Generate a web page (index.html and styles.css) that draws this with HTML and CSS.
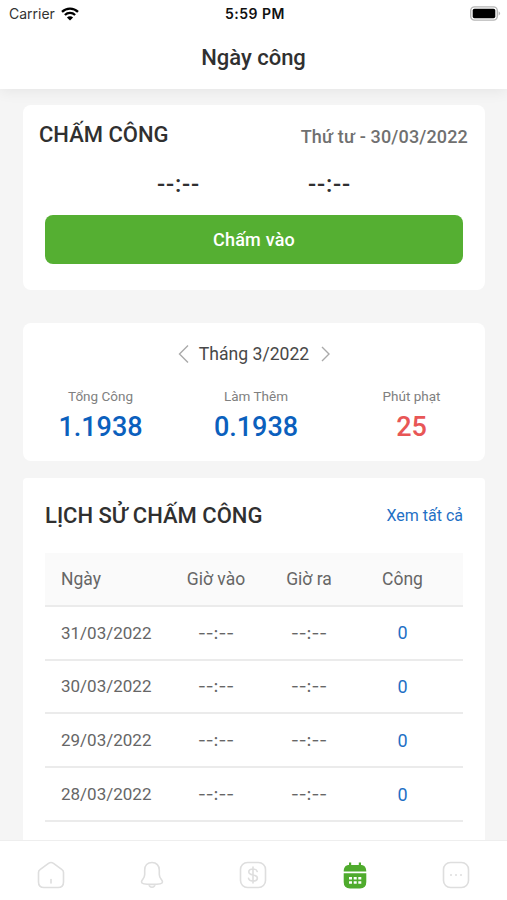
FILE: index.html
```html
<!DOCTYPE html>
<html lang="vi">
<head>
    <meta charset="UTF-8">
    <meta name="viewport" content="width=device-width, initial-scale=1.0">
    <title>Ngày công</title>
    <link rel="stylesheet" href="styles.css">
</head>
<body>
    <header class="header">
        <div class="status-bar">
            <div class="carrier">
                <span>Carrier</span>
                <svg width="18" height="14" viewBox="0 0 18 14">
                    <path d="M1 4.9a11.4 11.4 0 0 1 16 0M3.9 8a7.3 7.3 0 0 1 10.2 0" fill="none" stroke="#000" stroke-width="2.3"/>
                    <path d="M9 13.6L5.9 10.5a4.4 4.4 0 0 1 6.2 0z" fill="#000"/>
                </svg>
            </div>
            <span class="clock">5:59 PM</span>
            <div class="battery-wrap">
                <svg width="31" height="15" viewBox="0 0 31 15">
                    <rect x="0.7" y="0.9" width="26.6" height="13.2" rx="3.8" fill="#fff" stroke="#b5b5b5" stroke-width="1.4"/>
                    <rect x="2.7" y="2.8" width="22.6" height="9.4" rx="1.8" fill="#000"/>
                    <path d="M28.6 5.3q3 2.200 0 4.400z" fill="#b5b5b5"/>
                </svg>
            </div>
        </div>
        <h1>Ngày công</h1>
    </header>

    <main class="content">
        <section class="card checkin">
            <div class="checkin-top">
                <h2>CHẤM CÔNG</h2>
                <span class="today">Thứ tư - 30/03/2022</span>
            </div>
            <div class="times">
                <span>--:--</span>
                <span>--:--</span>
            </div>
            <button type="button">Chấm vào</button>
        </section>

        <section class="card summary">
            <div class="month">
                <svg width="11" height="20" viewBox="0 0 11 20"><path d="M10 1.5L1.5 10L10 18.5"/></svg>
                <span>Tháng 3/2022</span>
                <svg class="next" width="9" height="16" viewBox="0 0 9 16"><path d="M1 1L8 8L1 15"/></svg>
            </div>
            <div class="stats">
                <div class="stat">
                    <p>Tổng Công</p>
                    <strong>1.1938</strong>
                </div>
                <div class="stat">
                    <p>Làm Thêm</p>
                    <strong>0.1938</strong>
                </div>
                <div class="stat penalty">
                    <p>Phút phạt</p>
                    <strong>25</strong>
                </div>
            </div>
        </section>

        <section class="card history">
            <div class="history-top">
                <h2>LỊCH SỬ CHẤM CÔNG</h2>
                <a>Xem tất cả</a>
            </div>
            <table>
                <thead>
                    <tr><th class="date">Ngày</th><th class="in">Giờ vào</th><th class="out">Giờ ra</th><th class="work">Công</th></tr>
                </thead>
                <tbody>
                    <tr><td class="date">31/03/2022</td><td class="hour">--:--</td><td class="hour">--:--</td><td class="work">0</td></tr>
                    <tr><td class="date">30/03/2022</td><td class="hour">--:--</td><td class="hour">--:--</td><td class="work">0</td></tr>
                    <tr><td class="date">29/03/2022</td><td class="hour">--:--</td><td class="hour">--:--</td><td class="work">0</td></tr>
                    <tr><td class="date">28/03/2022</td><td class="hour">--:--</td><td class="hour">--:--</td><td class="work">0</td></tr>
                </tbody>
            </table>
        </section>
    </main>

    <nav class="tabs">
        <!-- Trang chủ -->
        <svg viewBox="0 0 28 28">
            <path d="M1.5 11.5Q1.5 9.600 3 8.600L11.500 2.400Q14 .7 16.500 2.400L25 8.600Q26.500 9.600 26.500 11.500V21Q26.500 26.500 21 26.500H7Q1.500 26.500 1.500 21z"/>
            <path class="door" d="M14 18.500v3.500"/>
        </svg>
        <!-- Thông báo -->
        <svg viewBox="0 0 28 28">
            <path d="M14 1.500c-4.500 0-7.300 3.200-7.300 7.500v4.500c0 4-3.200 5-3.200 7.500 0 1.300 3 2.400 10.500 2.400s10.500-1.100 10.500-2.400c0-2.500-3.200-3.500-3.200-7.500V9c0-4.300-2.800-7.500-7.300-7.500zM11 23.500c.4 3.600 5.600 3.600 6 0"/>
        </svg>
        <!-- Lương -->
        <svg viewBox="0 0 28 28">
            <rect x="1.5" y="1.5" width="25" height="25" rx="7"/>
            <path d="M14 6v16M18.200 10.500c-.5-1.800-2-2.500-4.200-2.500-2.400 0-4.200 1-4.200 2.900 0 4.200 8.600 1.900 8.600 6.200 0 2-1.900 3-4.400 3-2.400 0-4.100-.9-4.500-2.900"/>
        </svg>
        <!-- Ngày công -->
        <svg class="active" viewBox="0 0 28 28">
            <path d="M2.700 10.500C2.700 6 5 4 8 4V1.500h2.200V4h7.600V1.500H20V4c3 0 5.300 2 5.300 6.500zM2.700 12.200h22.600V21Q25.300 27.400 19 27.400H9Q2.700 27.400 2.700 21z"/>
            <path class="holes" d="M8 16h3v2.600H8zM12.700 16h3v2.600h-3zM17.300 16h3v2.600h-3zM8 20.200h3v2.600H8zM12.700 20.200h3v2.600h-3zM17.300 20.200h3v2.600h-3z"/>
        </svg>
        <!-- Thêm -->
        <svg viewBox="0 0 28 28">
            <rect x="1.5" y="1.5" width="25" height="25" rx="7"/>
            <path class="dots" d="M9 14h.01M14 14h.01M19 14h.01"/>
        </svg>
    </nav>
</body>
</html>
```
FILE: styles.css
```css
* {
    margin: 0;
    padding: 0;
    box-sizing: border-box;
}

body {
    height: 900px;
    display: flex;
    flex-direction: column;
    overflow: hidden;
    background: #f5f5f5;
    color: #303030;
    font-family: Roboto, sans-serif;
}

.header {
    height: 89px;
    flex-shrink: 0;
    background: #fff;
    box-shadow: 0 2px 14px rgba(0, 0, 0, 0.07);
}

.status-bar {
    height: 27px;
    padding: 0 6px 0 9px;
    display: grid;
    grid-template-columns: 1fr auto 1fr;
    align-items: center;
    color: #111;
    font-family: Inter, sans-serif;
    font-size: 14px;
}

.carrier {
    display: flex;
    align-items: center;
    gap: 6px;
    color: #333;
}

.clock {
    font-weight: 600;
    letter-spacing: 0.5px;
}

.battery-wrap {
    display: flex;
    justify-content: flex-end;
}

h1 {
    margin-top: 16px;
    font-size: 22px;
    font-weight: 500;
    line-height: 29px;
    text-align: center;
}

h2 {
    font-size: 22px;
    font-weight: 500;
    line-height: 28px;
}

.content {
    flex: 1;
    min-height: 0;
    padding: 16px 22px 0 23px;
}

.card {
    background: #fff;
    border-radius: 8px;
}

.checkin {
    height: 185px;
    padding: 16px 17px 0 16px;
}

.checkin-top {
    display: flex;
    justify-content: space-between;
}

.today {
    margin-top: 2px;
    color: #707070;
    font-size: 18px;
    font-weight: 500;
    line-height: 28px;
    letter-spacing: 0.15px;
}

.times {
    height: 64px;
    padding: 20px 0 0 1px;
    display: flex;
    justify-content: center;
    gap: 108px;
    font-size: 24px;
    font-weight: 500;
    line-height: 26px;
    letter-spacing: 0.8px;
}

button {
    display: block;
    width: 418px;
    height: 49px;
    margin-left: 6px;
    border: none;
    border-radius: 8px;
    background: #55af32;
    color: #fff;
    font-family: inherit;
    font-size: 18px;
    font-weight: 500;
    letter-spacing: 0.2px;
}

.summary {
    height: 138px;
    margin-top: 33px;
    padding-top: 18px;
}

.month {
    height: 25px;
    display: flex;
    justify-content: center;
    align-items: center;
    gap: 11px;
    color: #484848;
    font-size: 17.6px;
}

.month svg {
    fill: none;
    stroke: #aaa;
    stroke-width: 1.4;
}

.month span {
    margin-left: -1px;
}

.month .next {
    margin-left: 1px;
}

.stats {
    margin: 21px 0 0 4px;
    display: grid;
    grid-template-columns: repeat(3, 155.5px);
    justify-content: center;
    text-align: center;
}

.stat p {
    color: #808080;
    font-size: 13.5px;
    line-height: 18px;
}

.stat strong {
    display: block;
    color: #0b60bd;
    font-size: 27px;
    font-weight: 500;
    line-height: 44px;
}

.penalty strong {
    color: #e85656;
}

.history {
    height: 400px;
    margin-top: 17px;
    padding: 24px 22px 0;
    border-radius: 4px;
}

.history-top {
    height: 51px;
    display: flex;
    justify-content: space-between;
}

.history-top a {
    color: #1f70c5;
    font-size: 16px;
    line-height: 28px;
}

table {
    width: 418px;
    table-layout: fixed;
    border-collapse: separate;
    border-spacing: 0;
    color: #666;
    font-size: 17px;
}

th, td {
    height: 53.8px;
    border-bottom: 2px solid #ebebeb;
    font-weight: 400;
    text-align: center;
}

th {
    padding-top: 1px;
    background: #fafafa;
    font-size: 17.5px;
}

th.date {
    width: 124px;
}

th.in {
    width: 94px;
}

th.out {
    width: 92px;
}

.date {
    padding-left: 16px;
    text-align: left;
}

.hour {
    font-family: Inter, sans-serif;
}

.work {
    padding-right: 13px;
}

td.work {
    color: #1f70c5;
    font-size: 18px;
}

.tabs {
    position: relative;
    height: 60px;
    flex-shrink: 0;
    padding-top: 8px;
    border-top: 1px solid #eee;
    display: grid;
    grid-template-columns: repeat(5, 1fr);
    place-items: center;
    background: #fff;
}

.tabs svg {
    width: 28px;
    height: 28px;
    fill: none;
    stroke: #dedede;
    stroke-width: 1.6;
    stroke-linecap: round;
    stroke-linejoin: round;
}

.tabs .active {
    fill: #4fab2d;
    stroke: none;
}

.tabs .holes {
    fill: #fff;
}

.tabs .dots {
    stroke-width: 2;
}
```
